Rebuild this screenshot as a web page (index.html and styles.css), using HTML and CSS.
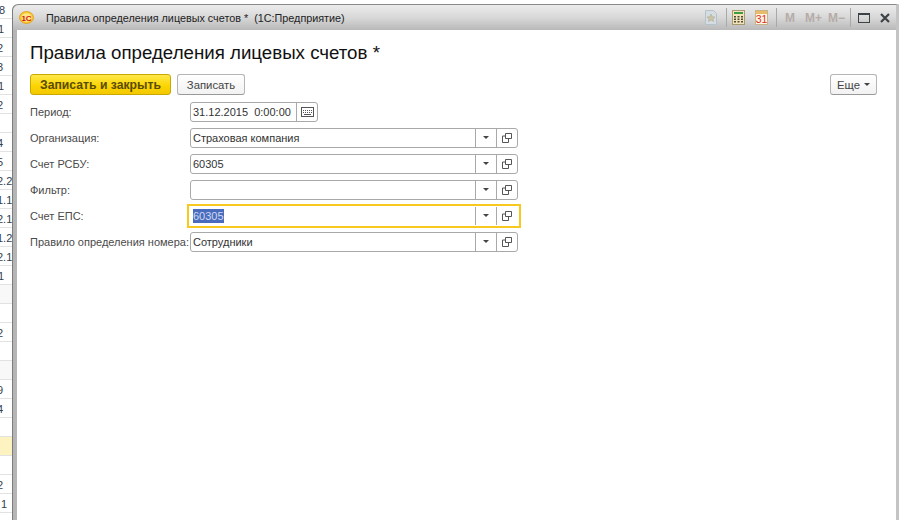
FILE: index.html
```html
<!DOCTYPE html>
<html lang="ru">
<head>
    <meta charset="UTF-8">
    <title>Правила определения лицевых счетов *</title>
    <link rel="stylesheet" href="styles.css">
</head>
<body>
    <!-- list behind the window, only its right edge shows -->
    <div class="back-list">
        <div class="back-row">8</div>
        <div class="back-row one">1</div>
        <div class="back-row cut">2</div>
        <div class="back-row cut">3</div>
        <div class="back-row one">1</div>
        <div class="back-row cut">2</div>
        <div class="back-row"></div>
        <div class="back-row cut">4</div>
        <div class="back-row cut">5</div>
        <div class="back-row cut">2.2</div>
        <div class="back-row cut">1.1</div>
        <div class="back-row cut">2.1</div>
        <div class="back-row cut">1.2</div>
        <div class="back-row cut">2.1</div>
        <div class="back-row one">1</div>
        <div class="back-row grey"></div>
        <div class="back-row"></div>
        <div class="back-row cut">2</div>
        <div class="back-row"></div>
        <div class="back-row grey"></div>
        <div class="back-row cut">9</div>
        <div class="back-row cut">4</div>
        <div class="back-row"></div>
        <div class="back-row current"></div>
        <div class="back-row"></div>
        <div class="back-row cut">2</div>
        <div class="back-row shift">1</div>
        <div class="back-row"></div>
    </div>

    <div class="window">
        <div class="titlebar">
            <svg class="logo" width="15" height="13" viewBox="0 0 15 13">
                <ellipse cx="7.5" cy="6.5" rx="7" ry="6" fill="#f8c92a" stroke="#e09a18" stroke-width=".8"/>
                <ellipse cx="7.5" cy="6.5" rx="5.2" ry="4.2" fill="#fde68a"/>
                <text x="7.5" y="9.500" text-anchor="middle" class="logo-text">1C</text>
            </svg>
            <span class="window-title">Правила определения лицевых счетов *&nbsp; (1С:Предприятие)</span>
            <div class="title-tools">
                <svg class="tool" width="12" height="15" viewBox="0 0 12 15">
                    <path d="M.5 .5h8l3 3v11h-11z" fill="#d5dde3" stroke="#b4c2cc"/>
                    <path d="M6 4l1.300 2.700 2.700.3-2 1.800.6 2.700-2.600-1.400-2.600 1.400.6-2.700-2-1.800 2.700-.3z" fill="#c9c4a8" stroke="#aaa68c" stroke-width=".5"/>
                </svg>
                <i class="tool-sep sep-star"></i>
                <svg class="tool tool-calc" width="13" height="15" viewBox="0 0 13 15">
                    <rect x=".5" y=".5" width="12" height="14" fill="#f3e3b8" stroke="#a89a70"/>
                    <rect x="2" y="2" width="9" height="2" fill="#3f9a45"/>
                    <path d="M2 6h2v1.500h-2zM5.500 6h2v1.500h-2zM9 6h2v1.500h-2zM2 8.500h2v1.500h-2zM5.500 8.500h2v1.500h-2zM9 8.500h2v1.500h-2zM2 11h2v1.500h-2zM5.500 11h2v1.500h-2zM9 11h2v1.500h-2z" fill="#4a4a3c"/>
                </svg>
                <svg class="tool tool-cal" width="13" height="15" viewBox="0 0 13 15">
                    <rect x=".5" y=".5" width="12" height="14" fill="#fdf6e6" stroke="#c9b48a"/>
                    <rect x="1" y="1" width="11" height="3" fill="#e8bd6a"/>
                    <text x="6.500" y="13" text-anchor="middle" class="cal-text">31</text>
                </svg>
                <i class="tool-sep sep-cal"></i>
                <span class="mem mem-m">M</span>
                <span class="mem mem-plus">M+</span>
                <span class="mem mem-minus">M−</span>
                <i class="tool-sep"></i>
                <span class="win-box"></span>
                <svg class="win-close" width="10" height="10" viewBox="0 0 10 10">
                    <path d="M1 1l8 8M9 1l-8 8" stroke="#3c4246" stroke-width="2.200"/>
                </svg>
            </div>
        </div>

        <div class="content">
            <h1 class="page-title">Правила определения лицевых счетов *</h1>

            <div class="command-bar">
                <button class="btn btn-primary">Записать и закрыть</button>
                <button class="btn">Записать</button>
                <button class="btn btn-more">Еще <i class="arrow"></i></button>
            </div>

            <div class="form">
                <div class="form-row">
                    <label class="form-label">Период:</label>
                    <div class="field field-date">
                        <span class="field-value">31.12.2015&nbsp; 0:00:00</span>
                        <span class="field-btn">
                            <svg width="13" height="10" viewBox="0 0 13 10">
                                <rect x=".5" y=".5" width="12" height="9" fill="#fff" stroke="#555"/>
                                <path d="M2 3h1v1h-1zM4 3h1v1h-1zM6 3h1v1h-1zM8 3h1v1h-1zM10 3h1v1h-1zM2 5h1v1h-1zM4 5h1v1h-1zM6 5h1v1h-1zM8 5h1v1h-1zM10 5h1v1h-1zM3 7h7v1h-7z" fill="#555"/>
                            </svg>
                        </span>
                    </div>
                </div>
                <div class="form-row">
                    <label class="form-label">Организация:</label>
                    <div class="field">
                        <span class="field-value">Страховая компания</span>
                        <span class="field-btn"><i class="arrow"></i></span>
                        <span class="field-btn"><svg class="open-icon" width="10" height="10" viewBox="0 0 10 10"><path d="M3.500 .5h6v5h-6zM3.500 3h-3v6.500h6v-4" fill="none" stroke="#555"/></svg></span>
                    </div>
                </div>
                <div class="form-row">
                    <label class="form-label">Счет РСБУ:</label>
                    <div class="field">
                        <span class="field-value">60305</span>
                        <span class="field-btn"><i class="arrow"></i></span>
                        <span class="field-btn"><svg class="open-icon" width="10" height="10" viewBox="0 0 10 10"><path d="M3.500 .5h6v5h-6zM3.500 3h-3v6.500h6v-4" fill="none" stroke="#555"/></svg></span>
                    </div>
                </div>
                <div class="form-row">
                    <label class="form-label">Фильтр:</label>
                    <div class="field">
                        <span class="field-value"></span>
                        <span class="field-btn"><i class="arrow"></i></span>
                        <span class="field-btn"><svg class="open-icon" width="10" height="10" viewBox="0 0 10 10"><path d="M3.500 .5h6v5h-6zM3.500 3h-3v6.500h6v-4" fill="none" stroke="#555"/></svg></span>
                    </div>
                </div>
                <div class="form-row">
                    <label class="form-label">Счет ЕПС:</label>
                    <div class="field field-focus">
                        <span class="field-value"><span class="selected">60305</span></span>
                        <span class="field-btn"><i class="arrow"></i></span>
                        <span class="field-btn"><svg class="open-icon" width="10" height="10" viewBox="0 0 10 10"><path d="M3.500 .5h6v5h-6zM3.500 3h-3v6.500h6v-4" fill="none" stroke="#555"/></svg></span>
                    </div>
                </div>
                <div class="form-row">
                    <label class="form-label">Правило определения номера:</label>
                    <div class="field">
                        <span class="field-value">Сотрудники</span>
                        <span class="field-btn"><i class="arrow"></i></span>
                        <span class="field-btn"><svg class="open-icon" width="10" height="10" viewBox="0 0 10 10"><path d="M3.500 .5h6v5h-6zM3.500 3h-3v6.500h6v-4" fill="none" stroke="#555"/></svg></span>
                    </div>
                </div>
            </div>
        </div>
    </div>
</body>
</html>
```

FILE: styles.css
```css
body {
    margin: 0;
    height: 520px;
    overflow: hidden;
    display: flex;
    background: #fff;
    font-family: "Liberation Sans", Arial, sans-serif;
    font-size: 11px;
    color: #333;
}

/* list behind the window */
.back-list {
    width: 12px;
    flex-shrink: 0;
    overflow: hidden;
}

.back-row {
    height: 19px;
    box-sizing: border-box;
    border-bottom: 1px solid #e2e2e2;
    font-size: 11px;
    line-height: 20px;
    color: #33414f;
    white-space: nowrap;
    text-indent: -1px;
}

.back-row.cut {
    text-indent: -3px;
}

.back-row.one {
    text-indent: -2px;
}

.back-row.shift {
    text-indent: 1px;
}

.back-row.grey {
    background: #f8f8f8;
}

.back-row.current {
    background: #fdf3c0;
}

/* window */
.window {
    flex: 1;
    margin-top: 4px;
    display: flex;
    flex-direction: column;
    box-sizing: border-box;
    border-left: 1px solid #7d7d7d;
    border-top: 1px solid #8a8a8a;
    border-right: 3px solid #c4c4c4;
    border-top-left-radius: 6px;
    background: linear-gradient(90deg, #b5b5b5, #dcdcdc);
}

.titlebar {
    height: 25px;
    flex-shrink: 0;
    display: flex;
    align-items: center;
    background: linear-gradient(180deg, #ececec 0%, #d8d8d8 50%, #b9b9b9 100%);
    border-top-left-radius: 6px;
    padding: 0 6px;
}

.logo {
    flex-shrink: 0;
}

.logo-text {
    font-family: "Liberation Sans", Arial, sans-serif;
    font-size: 8px;
    font-weight: bold;
    fill: #d4140f;
}

.window-title {
    margin-left: 12px;
    font-size: 10.800px;
    color: #222;
    white-space: nowrap;
}

.title-tools {
    margin-left: auto;
    display: flex;
    align-items: center;
}

.tool-calc {
    margin-left: 5px;
}

.tool-cal {
    margin-left: 10px;
}

.cal-text {
    font-family: "Liberation Sans", Arial, sans-serif;
    font-size: 10.500px;
    fill: #e03020;
}

.tool-sep {
    width: 1px;
    height: 19px;
    background: #a8a8a8;
}

.sep-star {
    margin-left: 9px;
}

.sep-cal {
    margin-left: 8px;
}

.mem {
    font-size: 12px;
    font-weight: bold;
    color: #b5aca8;
}

.mem-m {
    width: 20px;
    margin-left: 8px;
}

.mem-plus {
    width: 23px;
}

.mem-minus {
    width: 22px;
}

.win-box {
    width: 10px;
    height: 7px;
    margin-left: 7px;
    border: 1px solid #3c4246;
    border-top-width: 2px;
}

.win-close {
    margin-left: 10px;
}

.content {
    flex: 1;
    background: #fff;
    margin-left: 4px;
    padding: 0 19px 0 13px;
}

.page-title {
    margin: 10px 0 0;
    font-size: 18.700px;
    font-weight: normal;
    line-height: 26px;
    color: #111;
}

.command-bar {
    display: flex;
    gap: 6px;
    margin-top: 8px;
}

.btn {
    height: 21px;
    width: 68px;
    padding: 0;
    box-sizing: border-box;
    border: 1px solid #b5b5b5;
    border-bottom-color: #999;
    border-radius: 3px;
    background: linear-gradient(180deg, #fff, #f2f2f2);
    font-family: inherit;
    font-size: 11.300px;
    color: #444;
}

.btn-primary {
    width: 141px;
    border-color: #c9a900;
    background: linear-gradient(180deg, #ffe84a 0%, #fbd400 60%, #f3c800 100%);
    font-size: 12.200px;
    font-weight: bold;
    color: #5a4c00;
}

.btn-more {
    margin-left: auto;
    width: 47px;
    display: flex;
    align-items: center;
    justify-content: center;
    gap: 4px;
}

.arrow {
    display: inline-block;
    width: 0;
    height: 0;
    border-left: 3px solid transparent;
    border-right: 3px solid transparent;
    border-top: 3px solid #444;
}

.form {
    margin-top: 7px;
    display: flex;
    flex-direction: column;
    gap: 7px;
}

.form-row {
    display: flex;
    align-items: center;
    height: 19px;
}

.form-label {
    width: 160px;
    flex-shrink: 0;
    white-space: nowrap;
    color: #4a4a4a;
}

.field {
    width: 328px;
    height: 20px;
    box-sizing: border-box;
    display: flex;
    border: 1px solid #a9a9a9;
    border-radius: 3px;
    background: #fff;
}

.field-date {
    width: 128px;
}

.field-value {
    flex: 1;
    padding-left: 2px;
    line-height: 18px;
    color: #333;
    white-space: nowrap;
}

.field-btn {
    width: 20px;
    flex-shrink: 0;
    display: flex;
    align-items: center;
    justify-content: center;
    border-left: 1px solid #a9a9a9;
}

.field-focus {
    width: 334px;
    height: 24px;
    margin-left: -3px;
    padding: 1px 2px 1px 4px;
    border: 2px solid #f7c81e;
    border-radius: 0;
}

.field-focus .field-value {
    padding-left: 0;
}

.selected {
    display: inline-block;
    height: 14px;
    line-height: 14px;
    margin-top: 2px;
    background: #4a6cbf;
    color: #cfd8ee;
}
```
